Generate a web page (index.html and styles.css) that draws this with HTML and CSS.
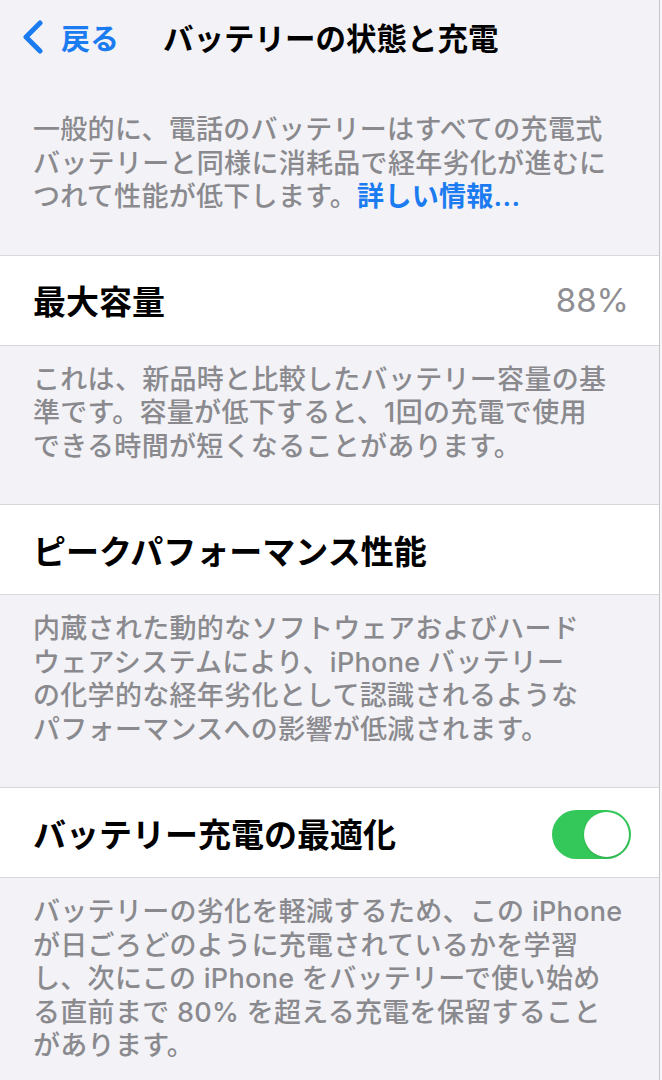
FILE: index.html
```html
<!DOCTYPE html>
<html lang="ja">
<head>
<meta charset="utf-8">
<title>バッテリーの状態と充電</title>
<link rel="stylesheet" href="styles.css">
</head>
<body>
<div class="screen">
  <header class="nav">
    <a class="back" href="#">
      <svg class="chevron" width="24" height="34" viewBox="0 0 24 34" aria-hidden="true">
        <path d="M19 3 L5 17 L19 31" fill="none" stroke="currentColor" stroke-width="5" stroke-linecap="round" stroke-linejoin="round"/>
      </svg>
      <span>戻る</span>
    </a>
    <h1 class="title">バッテリーの状態と充電</h1>
  </header>

  <p class="note intro">一般的に、電話のバッテリーはすべての充電式<br>バッテリーと同様に消耗品で経年劣化が進むに<br>つれて性能が低下します。<a class="link" href="#">詳しい情報...</a></p>

  <div class="cell">
    <span class="label">最大容量</span>
    <span class="value">88%</span>
  </div>
  <p class="note">これは、新品時と比較したバッテリー容量の基<br>準です。容量が低下すると、1回の充電で使用<br>できる時間が短くなることがあります。</p>

  <div class="cell">
    <span class="label">ピークパフォーマンス性能</span>
  </div>
  <p class="note">内蔵された動的なソフトウェアおよびハード<br>ウェアシステムにより、iPhone バッテリー<br>の化学的な経年劣化として認識されるような<br>パフォーマンスへの影響が低減されます。</p>

  <div class="cell">
    <span class="label">バッテリー充電の最適化</span>
    <span class="switch on" role="switch" aria-checked="true"></span>
  </div>
  <p class="note">バッテリーの劣化を軽減するため、この iPhone<br>が日ごろどのように充電されているかを学習<br>し、次にこの iPhone をバッテリーで使い始め<br>る直前まで 80% を超える充電を保留すること<br>があります。</p>
</div>
</body>
</html>
```

FILE: styles.css
```css
html {
  background: #f7f7f9;
}

body {
  margin: 0;
  font-family: "Inter", "Noto Sans CJK JP", sans-serif;
  -webkit-font-smoothing: antialiased;
}

.screen {
  width: 659px;
  min-height: 1080px;
  background: #f2f2f7;
  border-right: 1px solid #c4c4c9;
}

/* navigation bar */
.nav {
  height: 74px;
  display: flex;
  align-items: center;
  padding-left: 21px;
  box-sizing: border-box;
}

.back {
  display: flex;
  align-items: center;
  gap: 16px;
  color: #1b7bf0;
  text-decoration: none;
  font-size: 29px;
  font-weight: 700;
}

.chevron {
  display: block;
}

.title {
  margin: 0 0 0 44px;
  font-size: 30.5px;
  font-weight: 700;
  color: #000;
}

/* grouped footnotes */
.note {
  margin: 0;
  padding: 17px 33px 41px;
  font-size: 27px;
  letter-spacing: 0.3px;
  line-height: 33.5px;
  font-weight: 500;
  color: #8a8a8e;
  white-space: nowrap;
}

.intro {
  padding-top: 39px;
}

.link {
  color: #1b7bf0;
  text-decoration: none;
  font-weight: 600;
}

/* table cells */
.cell {
  height: 89px;
  display: flex;
  align-items: center;
  justify-content: space-between;
  padding: 0 28px 0 33px;
  background: #fff;
  border-top: 1px solid #d8d8dc;
  border-bottom: 1px solid #d8d8dc;
}

.label {
  font-size: 33px;
  font-weight: 700;
  color: #000;
}

.value {
  font-size: 33px;
  color: #8e8e93;
  margin-right: 2px;
}

/* toggle switch */
.switch {
  position: relative;
  width: 79px;
  height: 49px;
  border-radius: 25px;
  background: #34c759;
  margin-top: 3px;
}

.switch::after {
  content: "";
  position: absolute;
  top: 2px;
  right: 2px;
  width: 45px;
  height: 45px;
  border-radius: 50%;
  background: #fff;
  box-shadow: 0 1px 2px rgba(0, 0, 0, 0.15);
}
```
